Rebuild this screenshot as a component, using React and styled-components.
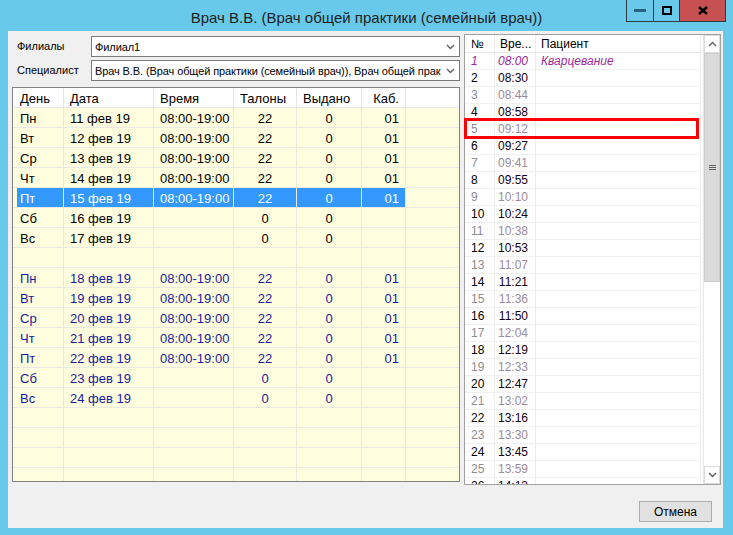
import React from 'react';
import styled, { createGlobalStyle } from 'styled-components';

const Global = createGlobalStyle`
  html, body { margin: 0; padding: 0; width: 733px; height: 535px; overflow: hidden; background: #68c9ea; }
  body { font-family: "Liberation Sans", Arial, sans-serif; }
  * { box-sizing: border-box; }
`;

const Window = styled.div`
  width: 733px;
  height: 535px;
  background: #68c9ea;
  display: flex;
  flex-direction: column;
`;

const TitleBar = styled.div`
  height: 31px;
  flex: none;
  position: relative;
  display: flex;
  align-items: center;
  justify-content: center;
  padding-top: 3px;
  font-size: 15px;
  color: #1e1e1e;
`;

const CaptionButtons = styled.div`
  position: absolute;
  top: 0;
  right: 7px;
  display: flex;
  height: 22px;
  border: 1px solid #2d3b42;
  border-top: none;
`;

const CaptionButton = styled.div`
  width: ${p => p.$w}px;
  height: 100%;
  display: flex;
  align-items: center;
  justify-content: center;
  background: ${p => (p.$close ? '#c75050' : 'transparent')};
  border-left: ${p => (p.$first ? 'none' : '1px solid #2d3b42')};
`;

const Client = styled.div`
  flex: 1;
  margin: 0 10px 7px 8px;
  background: #f0f0f0;
  display: flex;
  flex-direction: column;
  padding: 3px 2px 0 4px;
`;

const Main = styled.div`
  display: flex;
  gap: 4px;
  height: 451px;
`;

const LeftCol = styled.div`
  width: 448px;
  display: flex;
  flex-direction: column;
  padding-top: 2px;
`;

const FormRow = styled.div`
  display: flex;
  align-items: center;
  height: 21px;
  padding-left: 5px;
  margin-bottom: 3px;
  font-size: 11px;
  color: #000;
`;

const Label = styled.div`
  width: 74px;
  flex: none;
  margin-top: -2px;
`;

const Combo = styled.div`
  flex: 1;
  height: 21px;
  background: #fff;
  border: 1px solid #7a7a7a;
  display: flex;
  align-items: center;
  padding: 0 4px 0 3px;
  overflow: hidden;
  white-space: nowrap;
  font-size: 11px;
  letter-spacing: -0.1px;
`;

const ComboText = styled.div`
  flex: 1;
  overflow: hidden;
  margin-right: 4px;
`;

const Chevron = ({ up }) => (
  <svg width="9" height="6" viewBox="0 0 9 6" style={{ flex: 'none' }}>
    <path d={up ? 'M1 5 L4.5 1.5 L8 5' : 'M1 1 L4.5 4.5 L8 1'} fill="none" stroke="#606060" strokeWidth="1.4" />
  </svg>
);

const DayGrid = styled.div`
  margin-top: 3px;
  height: 395px;
  border: 1px solid #828282;
  background: #ffffe0;
  overflow: hidden;
  font-size: 13px;
`;

const DayHeader = styled.div`
  display: flex;
  height: 20px;
  background: #fff;
  border-bottom: 1px solid #e6e6e6;
`;

const DayRow = styled.div`
  display: flex;
  height: 20px;
  border-bottom: 1px solid #e8e8e4;
  color: ${p => p.$color};
`;

const COLS = [47, 90, 80, 63, 65, 44];

const DayCell = styled.div`
  width: ${p => p.$w}px;
  flex: none;
  margin-left: ${p => (p.$first ? 4 : 0)}px;
  border-right: 1px solid #e8e8e4;
  display: flex;
  align-items: center;
  justify-content: ${p => p.$align};
  padding: 1px ${p => (p.$align === 'flex-end' ? 6 : 0)}px 0 ${p => (p.$first ? 3 : p.$align === 'flex-start' ? 6 : 0)}px;
  background: ${p => (p.$sel ? '#3399ff' : 'transparent')};
  color: ${p => (p.$sel ? '#fff' : 'inherit')};
  white-space: nowrap;
`;

const HeadCell = styled(DayCell)`
  border-right-color: #e4e4e4;
  color: #000;
`;

const Filler = styled.div`
  flex: 1;
`;

const RightCol = styled.div`
  width: 257px;
`;

const ListGrid = styled.div`
  position: relative;
  height: 451px;
  border: 1px solid #a0a0a0;
  background: #fff;
  display: flex;
  gap: 2px;
  font-size: 12px;
`;

const ListTable = styled.div`
  width: 236px;
  overflow: hidden;
`;

const ListHeader = styled.div`
  display: flex;
  height: 18px;
  border-bottom: 1px solid #e8e8e8;
  color: #000;
  line-height: 14px;
`;

const ListRow = styled.div`
  display: flex;
  height: 17px;
  border-bottom: 1px solid #f0f0f0;
  line-height: 13px;
  font-style: ${p => (p.$italic ? 'italic' : 'normal')};
`;

const LCOLS = [30, 41, 165];

const ListCell = styled.div`
  width: ${p => p.$w}px;
  flex: none;
  border-right: 1px solid #ececec;
  display: flex;
  align-items: center;
  justify-content: ${p => (p.$right ? 'flex-end' : 'flex-start')};
  padding: 1px ${p => (p.$right ? 7 : 0)}px 0 ${p => (p.$right ? 0 : p.$pl)}px;
  color: ${p => p.$color};
  white-space: nowrap;
  overflow: hidden;
`;

const ScrollBar = styled.div`
  width: 17px;
  display: flex;
  flex-direction: column;
  border-left: 1px solid #e6e6e6;
`;

const ScrollBtn = styled.div`
  height: 18px;
  flex: none;
  display: flex;
  align-items: center;
  justify-content: center;
  background: #fff;
  border: 1px solid #dcdcdc;
`;

const Thumb = styled.div`
  height: 229px;
  flex: none;
  background: #dadada;
  border: 1px solid #cdcdcd;
  display: flex;
  align-items: center;
  justify-content: center;
`;

const Grip = styled.div`
  width: 7px;
  height: 5px;
  border-top: 1px solid #606060;
  border-bottom: 1px solid #606060;
  display: flex;
  align-items: center;
  &::after { content: ''; display: block; width: 100%; height: 1px; background: #606060; }
`;

const Track = styled.div`
  flex: 1;
  background: #fff;
`;

const Marker = styled.div`
  position: absolute;
  top: 83px;
  left: -1px;
  width: 235px;
  height: 21px;
  border: 3px solid #ff0000;
  pointer-events: none;
`;

const Footer = styled.div`
  display: flex;
  justify-content: flex-end;
  padding: 16px 9px 0 0;
`;

const Button = styled.div`
  width: 73px;
  height: 21px;
  background: #e1e1e1;
  border: 1px solid #adadad;
  display: flex;
  align-items: center;
  justify-content: center;
  font-size: 12px;
  color: #000;
`;

const week = (start, color) => {
  const days = ['Пн', 'Вт', 'Ср', 'Чт', 'Пт', 'Сб', 'Вс'];
  return days.map((d, i) => {
    const work = i < 5;
    return {
      cells: [d, `${start + i} фев 19`, work ? '08:00-19:00' : '', work ? '22' : '0', '0', work ? '01' : ''],
      color,
    };
  });
};

const dayRows = [
  ...week(11, '#000'),
  { cells: ['', '', '', '', '', ''], color: '#000' },
  ...week(18, '#1a1a9c'),
  ...Array.from({ length: 4 }, () => ({ cells: ['', '', '', '', '', ''], color: '#000' })),
];
dayRows[4].sel = true;

const ALIGN = ['flex-start', 'flex-start', 'flex-start', 'center', 'center', 'flex-end'];
const HEAD_ALIGN = ['flex-start', 'flex-start', 'flex-start', 'flex-start', 'flex-start', 'flex-end'];
const HEADS = ['День', 'Дата', 'Время', 'Талоны', 'Выдано', 'Каб.'];

const times = ['08:00', '08:30', '08:44', '08:58', '09:12', '09:27', '09:41', '09:55', '10:10', '10:24', '10:38', '10:53', '11:07', '11:21', '11:36', '11:50', '12:04', '12:19', '12:33', '12:47', '13:02', '13:16', '13:30', '13:45', '13:59', '14:13'];

export default function App() {
  return (
    <>
      <Global />
      <Window>
        <TitleBar>
          Врач В.В. (Врач общей практики (семейный врач))
          <CaptionButtons>
            <CaptionButton $w={26} $first>
              <svg width="12" height="3"><rect width="12" height="3" fill="#2b5f7e" /></svg>
            </CaptionButton>
            <CaptionButton $w={26}>
              <svg width="10" height="9"><rect x="1" y="1" width="8" height="7" fill="none" stroke="#000" strokeWidth="2" /></svg>
            </CaptionButton>
            <CaptionButton $w={46} $close>
              <svg width="10" height="9"><path d="M1 1 L9 8 M9 1 L1 8" stroke="#000" strokeWidth="2.4" /></svg>
            </CaptionButton>
          </CaptionButtons>
        </TitleBar>
        <Client>
          <Main>
            <LeftCol>
              <FormRow>
                <Label>Филиалы</Label>
                <Combo><ComboText>Филиал1</ComboText><Chevron /></Combo>
              </FormRow>
              <FormRow>
                <Label>Специалист</Label>
                <Combo>
                  <ComboText>Врач В.В. (Врач общей практики (семейный врач)), Врач общей прак</ComboText>
                  <Chevron />
                </Combo>
              </FormRow>
              <DayGrid>
                <DayHeader>
                  {HEADS.map((h, i) => (
                    <HeadCell key={h} $w={COLS[i]} $first={i === 0} $align={HEAD_ALIGN[i]}>{h}</HeadCell>
                  ))}
                  <Filler />
                </DayHeader>
                {dayRows.map((r, ri) => (
                  <DayRow key={ri} $color={r.color}>
                    {r.cells.map((c, i) => (
                      <DayCell key={i} $w={COLS[i]} $first={i === 0} $align={ALIGN[i]} $sel={r.sel}>{c}</DayCell>
                    ))}
                    <Filler />
                  </DayRow>
                ))}
              </DayGrid>
            </LeftCol>
            <RightCol>
              <ListGrid>
                <ListTable>
                  <ListHeader>
                    <ListCell $w={LCOLS[0]} $pl={6} $color="#000">№</ListCell>
                    <ListCell $w={LCOLS[1]} $pl={5} $color="#000">Вре...</ListCell>
                    <ListCell $w={LCOLS[2]} $pl={5} $color="#000">Пациент</ListCell>
                  </ListHeader>
                  {times.map((t, i) => {
                    const n = i + 1;
                    const first = n === 1;
                    const gray = n % 2 === 1 && !first;
                    const numColor = first ? '#9c2a9c' : gray ? '#8c8c8c' : '#000';
                    const timeColor = first ? '#9c2a9c' : gray ? '#9a8c9a' : '#140014';
                    return (
                      <ListRow key={n} $italic={first}>
                        <ListCell $w={LCOLS[0]} $pl={6} $color={numColor}>{n}</ListCell>
                        <ListCell $w={LCOLS[1]} $right $color={timeColor}>{t}</ListCell>
                        <ListCell $w={LCOLS[2]} $pl={5} $color="#9c2a9c">{first ? 'Кварцевание' : ''}</ListCell>
                      </ListRow>
                    );
                  })}
                </ListTable>
                <ScrollBar>
                  <ScrollBtn><Chevron up /></ScrollBtn>
                  <Thumb><Grip /></Thumb>
                  <Track />
                  <ScrollBtn><Chevron /></ScrollBtn>
                </ScrollBar>
                <Marker />
              </ListGrid>
            </RightCol>
          </Main>
          <Footer>
            <Button>Отмена</Button>
          </Footer>
        </Client>
      </Window>
    </>
  );
}
